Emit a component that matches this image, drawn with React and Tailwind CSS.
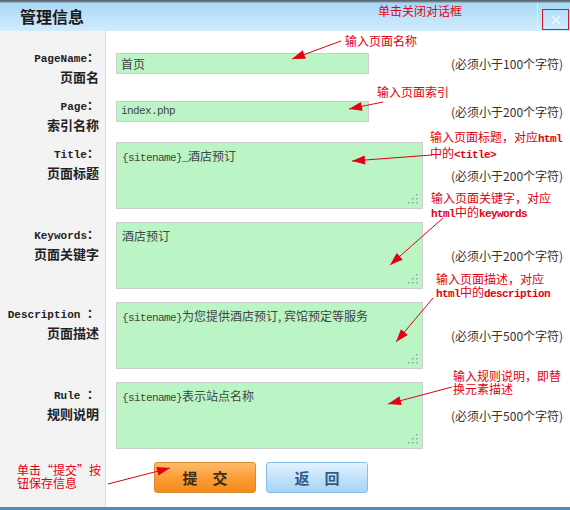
import React from "react";

const arrows = [
  [341, 41, 292, 59],
  [383, 102, 349, 109],
  [432, 155, 352, 161],
  [443, 218, 390, 265],
  [433, 298, 396, 342],
  [452, 387, 388, 404],
  [108, 484, 170, 468],
];

function head(x1, y1, x2, y2) {
  const dx = x2 - x1;
  const dy = y2 - y1;
  const L = Math.hypot(dx, dy);
  const ux = dx / L;
  const uy = dy / L;
  const len = 13;
  const hw = 4.5;
  const bx = x2 - ux * len;
  const by = y2 - uy * len;
  return `${x2},${y2} ${bx - uy * hw},${by + ux * hw} ${bx + uy * hw},${by - ux * hw}`;
}

function M({ children }) {
  return (
    <span className="font-['Liberation_Mono',monospace] text-[11px] tracking-[-0.6px]">
      {children}
    </span>
  );
}

function Label({ en, zh, pt }) {
  return (
    <div
      className={`w-[106px] shrink-0 bg-[#f3f3f3] border-r border-[#d9d9d9] pr-[6px] text-right text-[#222] leading-[18px] ${pt}`}
    >
      <div className="font-bold">
        <span className="font-['Liberation_Mono',monospace] text-[11px]">{en}</span>
        <span className="font-['Noto_Sans_CJK_SC',sans-serif] text-[12px]">：</span>
      </div>
      <div className="font-['Noto_Sans_CJK_SC',sans-serif] text-[13px] font-bold">{zh}</div>
    </div>
  );
}

function Hint({ children }) {
  return (
    <div className="font-['Noto_Sans_CJK_SC',sans-serif] text-[12px] text-[#333] whitespace-nowrap">
      {children}
    </div>
  );
}

function Grip() {
  return (
    <svg className="absolute right-[4px] bottom-[4px]" width="11" height="11" viewBox="0 0 11 11">
      {[
        [9, 1],
        [9, 5],
        [5, 5],
        [9, 9],
        [5, 9],
        [1, 9],
      ].map(([x, y], i) => (
        <g key={i}>
          <rect x={x + 0.6} y={y + 0.6} width="1.6" height="1.6" fill="#ffffff" opacity="0.8" />
          <rect x={x} y={y} width="1.6" height="1.6" fill="#8fa894" />
        </g>
      ))}
    </svg>
  );
}

function InputBox({ children }) {
  return (
    <div className="w-[253px] h-[21px] bg-[#bbf5c5] border border-[#c9cfca] px-[4px] flex items-center text-[#444] font-['Noto_Sans_CJK_SC',sans-serif] text-[12px] leading-[19px]">
      {children}
    </div>
  );
}

function AreaBox({ children }) {
  return (
    <div className="relative w-[307px] h-[67px] bg-[#bbf5c5] border border-[#c9cfca] px-[5px] pt-[5px] text-[#444] font-['Noto_Sans_CJK_SC',sans-serif] text-[12px] leading-[16px]">
      {children}
      <Grip />
    </div>
  );
}

function Note({ className, children }) {
  return (
    <div
      className={`absolute text-[#e40012] font-['Noto_Sans_CJK_SC',sans-serif] text-[12px] leading-[13px] whitespace-nowrap ${className}`}
    >
      {children}
    </div>
  );
}

function NM({ children }) {
  return (
    <span className="font-['Liberation_Mono',monospace] font-bold text-[11px] tracking-[-0.6px]">
      {children}
    </span>
  );
}

export default function App() {
  return (
    <div className="relative w-[570px] h-[510px] bg-white overflow-hidden font-['Noto_Sans_CJK_SC',sans-serif]">
      {/* Header */}
      <div className="h-[31px] flex bg-[linear-gradient(to_bottom,#4f5a64_0px,#7c8a95_2px,#a8d8f6_3px,#b8e1f9_14px,#d2ecfb_31px)]">
        <div className="pl-[20px] pt-[4px] text-[16px] font-bold text-[#1b1b1b] leading-[24px]">
          管理信息
        </div>
        <div className="ml-auto mt-[3px] w-px h-[28px] bg-[#dff1fc]" />
        <div className="ml-[4px] mr-[1px] mt-[9px] w-[27px] h-[21px] border border-[#d11a22] flex items-center justify-center">
          <svg width="10" height="10" viewBox="0 0 10 10">
            <path d="M1 1 L9 9 M9 1 L1 9" stroke="#eef8fe" strokeWidth="1.6" />
          </svg>
        </div>
      </div>

      {/* Row 1 */}
      <div className="flex h-[57px]">
        <Label en="PageName" zh="页面名" pt="pt-[15px]" />
        <div className="pt-[22px]">
          <div className="flex items-center">
            <div className="w-[345px] pl-[10px]">
              <InputBox>首页</InputBox>
            </div>
            <Hint>(必须小于100个字符)</Hint>
          </div>
        </div>
      </div>

      {/* Row 2 */}
      <div className="flex h-[47px]">
        <Label en="Page" zh="索引名称" pt="pt-[6px]" />
        <div className="pt-[13px]">
          <div className="flex items-center">
            <div className="w-[345px] pl-[10px]">
              <InputBox>
                <M>index.php</M>
              </InputBox>
            </div>
            <Hint>(必须小于200个字符)</Hint>
          </div>
        </div>
      </div>

      {/* Row 3 */}
      <div className="flex h-[80px]">
        <Label en="Title" zh="页面标题" pt="pt-[7px]" />
        <div className="pt-[7px]">
          <div className="flex items-center">
            <div className="w-[345px] pl-[10px]">
              <AreaBox>
                <M>{"{sitename}_"}</M>酒店预订
              </AreaBox>
            </div>
            <Hint>(必须小于200个字符)</Hint>
          </div>
        </div>
      </div>

      {/* Row 4 */}
      <div className="flex h-[80px]">
        <Label en="Keywords" zh="页面关键字" pt="pt-[8px]" />
        <div className="pt-[7px]">
          <div className="flex items-center">
            <div className="w-[345px] pl-[10px]">
              <AreaBox>酒店预订</AreaBox>
            </div>
            <Hint>(必须小于200个字符)</Hint>
          </div>
        </div>
      </div>

      {/* Row 5 */}
      <div className="flex h-[80px]">
        <Label en="Description " zh="页面描述" pt="pt-[7px]" />
        <div className="pt-[7px]">
          <div className="flex items-center">
            <div className="w-[345px] pl-[10px]">
              <AreaBox>
                <M>{"{sitename}"}</M>为您提供酒店预订, 宾馆预定等服务
              </AreaBox>
            </div>
            <Hint>(必须小于500个字符)</Hint>
          </div>
        </div>
      </div>

      {/* Row 6 */}
      <div className="flex h-[80px]">
        <Label en="Rule " zh="规则说明" pt="pt-[8px]" />
        <div className="pt-[7px]">
          <div className="flex items-center">
            <div className="w-[345px] pl-[10px]">
              <AreaBox>
                <M>{"{sitename}"}</M>表示站点名称
              </AreaBox>
            </div>
            <Hint>(必须小于500个字符)</Hint>
          </div>
        </div>
      </div>

      {/* Buttons */}
      <div className="flex h-[52px]">
        <div className="w-[106px] shrink-0 bg-[#f3f3f3] border-r border-[#d9d9d9]" />
        <div className="pt-[7px] pl-[48px] flex gap-[10px] items-start">
          <button className="w-[102px] h-[31px] rounded-[3px] border border-[#d88a33] bg-[linear-gradient(to_bottom,#ffbc6a,#fb9d38_50%,#f58a1c)] text-[15px] font-bold text-[#3b2a18] leading-none">
            提　交
          </button>
          <button className="w-[102px] h-[31px] rounded-[3px] border border-[#86bde6] bg-[linear-gradient(to_bottom,#e3f2fe,#c3e3fb_50%,#a7d3f6)] text-[15px] font-bold text-[#2f5d86] leading-none">
            返　回
          </button>
        </div>
      </div>

      {/* Bottom border */}
      <div className="h-[3px] bg-[#4a8cbf]" />

      {/* Annotations */}
      <Note className="left-[378px] top-[4px]">单击关闭对话框</Note>
      <Note className="left-[345px] top-[34px]">输入页面名称</Note>
      <Note className="left-[377px] top-[85px]">输入页面索引</Note>
      <Note className="left-[430px] top-[130px]">
        <div>
          输入页面标题，对应<NM>html</NM>
        </div>
        <div>
          中的<NM>{"<title>"}</NM>
        </div>
      </Note>
      <Note className="left-[431px] top-[191px] leading-[14px]">
        <div>输入页面关键字，对应</div>
        <div>
          <NM>html</NM>中的<NM>keywords</NM>
        </div>
      </Note>
      <Note className="left-[436px] top-[272px]">
        <div>输入页面描述，对应</div>
        <div>
          <NM>html</NM>中的<NM>description</NM>
        </div>
      </Note>
      <Note className="left-[453px] top-[369px]">
        <div>输入规则说明，即替</div>
        <div>换元素描述</div>
      </Note>
      <Note className="left-[17px] top-[463px]">
        <div>单击“提交”按</div>
        <div>钮保存信息</div>
      </Note>

      <svg className="absolute left-0 top-0 pointer-events-none" width="570" height="510">
        {arrows.map(([x1, y1, x2, y2], i) => (
          <g key={i}>
            <line x1={x1} y1={y1} x2={x2} y2={y2} stroke="#e40012" strokeWidth="1" />
            <polygon points={head(x1, y1, x2, y2)} fill="#e40012" />
          </g>
        ))}
      </svg>
    </div>
  );
}
